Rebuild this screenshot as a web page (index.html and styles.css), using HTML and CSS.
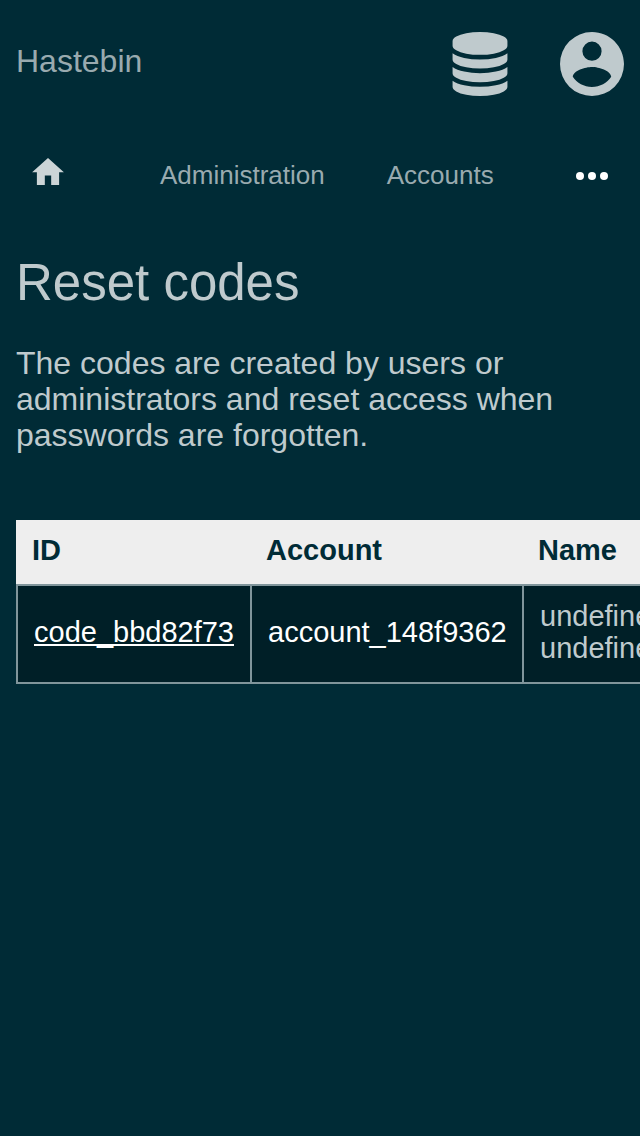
FILE: index.html
```html
<!DOCTYPE html>
<html lang="en">
<head>
<meta charset="utf-8">
<meta name="viewport" content="width=device-width">
<title>Reset codes - Hastebin</title>
<link rel="stylesheet" href="styles.css">
</head>
<body>
<header class="topbar">
  <a class="brand" href="#">Hastebin</a>
  <div class="actions">
    <button class="icon-button" type="button" aria-label="Database">
      <svg class="icon" viewBox="-128 0 1792 1792"><path d="M768 768q237 0 443-43t325-127v170q0 69-103 128t-280 93.500-385 34.500-385-34.500-280-93.500-103-128v-170q119 84 325 127t443 43zm0 768q237 0 443-43t325-127v170q0 69-103 128t-280 93.500-385 34.500-385-34.500-280-93.500-103-128v-170q119 84 325 127t443 43zm0-384q237 0 443-43t325-127v170q0 69-103 128t-280 93.500-385 34.500-385-34.500-280-93.500-103-128v-170q119 84 325 127t443 43zm0-1152q208 0 385 34.500t280 93.500 103 128v128q0 69-103 128t-280 93.500-385 34.500-385-34.500-280-93.500-103-128v-128q0-69 103-128t280-93.500 385-34.500z"/></svg>
    </button>
    <button class="icon-button" type="button" aria-label="Account">
      <svg class="icon" viewBox="2 2 20 20"><path d="M12,19.2C9.5,19.2 7.29,17.92 6,16C6.03,14 10,12.9 12,12.9C14,12.9 17.97,14 18,16C16.71,17.92 14.5,19.2 12,19.2M12,5A3,3 0 0,1 15,8A3,3 0 0,1 12,11A3,3 0 0,1 9,8A3,3 0 0,1 12,5M12,2A10,10 0 0,0 2,12A10,10 0 0,0 12,22A10,10 0 0,0 22,12C22,6.47 17.5,2 12,2Z"/></svg>
    </button>
  </div>
</header>
<nav class="nav">
  <a class="home" href="#" aria-label="Home">
    <svg class="home-icon" viewBox="2 3 20 17"><path d="M10,20V14H14V20H19V12H22L12,3L2,12H5V20H10Z"/></svg>
  </a>
  <div class="crumbs">
    <a class="crumb" href="#">Administration</a>
    <a class="crumb" href="#">Accounts</a>
  </div>
  <button class="more" type="button" aria-label="More">
    <svg class="more-icon" viewBox="0 0 32 8"><circle cx="4" cy="4" r="4"/><circle cx="16" cy="4" r="4"/><circle cx="28" cy="4" r="4"/></svg>
  </button>
</nav>
<main class="content">
  <h1 class="title">Reset codes</h1>
  <p class="intro">The codes are created by users or administrators and reset access when passwords are forgotten.</p>
  <div class="table-scroll">
    <table class="codes">
      <thead>
        <tr><th class="col-id">ID</th><th class="col-account">Account</th><th class="col-name">Name</th></tr>
      </thead>
      <tbody>
        <tr>
          <td><a class="code-link" href="#">code_bbd82f73</a></td>
          <td class="account">account_148f9362</td>
          <td>undefined<br>undefined</td>
        </tr>
      </tbody>
    </table>
  </div>
</main>
</body>
</html>
```
FILE: styles.css
```css
* {
  box-sizing: border-box;
}

body {
  margin: 0;
  min-height: 100vh;
  background: #002b36;
  color: #bfcacd;
  font-family: "Liberation Sans", Arial, sans-serif;
  font-size: 32px;
  line-height: 36px;
}

a {
  color: inherit;
  text-decoration: none;
}

button {
  padding: 0;
  border: 0;
  background: none;
  color: inherit;
}

svg {
  display: block;
  fill: currentColor;
}

.topbar {
  display: flex;
  align-items: center;
  justify-content: space-between;
  padding: 32px 16px;
}

.brand {
  padding-bottom: 6px;
  color: #99aaaf;
}

.actions {
  display: flex;
  gap: 48px;
}

.icon {
  width: 64px;
  height: 64px;
}

.nav {
  display: flex;
  align-items: center;
  height: 96px;
  color: #99aaaf;
  font-size: 26px;
  line-height: 32px;
}

.home {
  padding: 0 32px 9px;
  color: #ccd5d7;
}

.home-icon {
  width: 32px;
  height: 27px;
}

.crumbs {
  display: flex;
  flex: 1;
  gap: 62px;
  padding: 0 0 2px 64px;
}

.more {
  padding: 32px;
  color: #fff;
}

.more-icon {
  width: 32px;
  height: 8px;
}

.content {
  padding: 30px 0 32px 16px;
}

.title {
  margin: 0 0 33px;
  font-size: 51px;
  font-weight: 400;
  line-height: 58px;
}

.intro {
  margin: 0 16px 67px 0;
}

.table-scroll {
  overflow-x: auto;
  scrollbar-width: none;
}

.codes {
  width: 780px;
  table-layout: fixed;
  border-spacing: 0;
  font-size: 29px;
  line-height: 32px;
}

.codes th {
  padding: 14px 16px 18px;
  background: #eee;
  color: #002b36;
  text-align: left;
}

.codes td {
  padding: 14px 0 18px 16px;
  border: 2px solid #80959b;
  border-right: 0;
  background: #001f27;
}

.col-id {
  width: 234px;
}

.col-account {
  width: 272px;
}

.codes .account {
  color: #fff;
}

.code-link {
  color: #fff;
  text-decoration: underline;
}
```
